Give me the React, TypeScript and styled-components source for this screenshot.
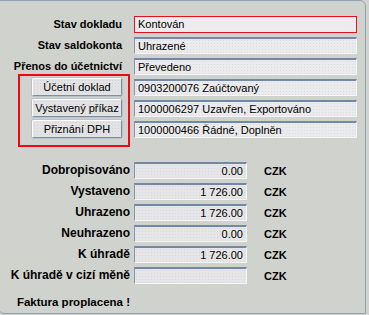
import React from "react";
import styled, { createGlobalStyle } from "styled-components";

const GlobalStyle = createGlobalStyle`
  html, body {
    margin: 0;
    padding: 0;
    background: #d0d2ce;
    overflow: hidden;
  }
  body {
    font-family: "Liberation Sans", Arial, sans-serif;
    color: #000;
  }
`;

interface StatusRow {
  label: string;
  value: string;
  focused?: boolean;
}

interface DocRow {
  button: string;
  value: string;
}

interface AmountRow {
  label: string;
  value: string;
}

const statusRows: StatusRow[] = [
  { label: "Stav dokladu", value: "Kontován", focused: true },
  { label: "Stav saldokonta", value: "Uhrazené" },
  { label: "Přenos do účetnictví", value: "Převedeno" },
];

const docRows: DocRow[] = [
  { button: "Účetní doklad", value: "0903200076 Zaúčtovaný" },
  { button: "Vystavený příkaz", value: "1000006297 Uzavřen, Exportováno" },
  { button: "Přiznání DPH", value: "1000000466 Řádné, Doplněn" },
];

const amountRows: AmountRow[] = [
  { label: "Dobropisováno", value: "0.00" },
  { label: "Vystaveno", value: "1 726.00" },
  { label: "Uhrazeno", value: "1 726.00" },
  { label: "Neuhrazeno", value: "0.00" },
  { label: "K úhradě", value: "1 726.00" },
  { label: "K úhradě v cizí měně", value: "" },
];

const App: React.FC = () => {
  return (
    <>
      <GlobalStyle />
      <Panel>
        <TopGrid>
          {statusRows.map((row) => (
            <React.Fragment key={row.label}>
              <Label>{row.label}</Label>
              <Field $focused={row.focused}>{row.value}</Field>
            </React.Fragment>
          ))}
          <ButtonGroup>
            {docRows.map((row) => (
              <Button key={row.button}>{row.button}</Button>
            ))}
          </ButtonGroup>
          {docRows.map((row) => (
            <Field key={row.value}>{row.value}</Field>
          ))}
        </TopGrid>

        <AmountGrid>
          {amountRows.map((row) => (
            <React.Fragment key={row.label}>
              <AmountLabel>{row.label}</AmountLabel>
              <AmountField>{row.value}</AmountField>
              <Currency>CZK</Currency>
            </React.Fragment>
          ))}
          <Note>Faktura proplacena !</Note>
        </AmountGrid>
      </Panel>
    </>
  );
};

const fieldBorders = `
  border-top: 2px solid #7188a6;
  border-left: 1px solid #8a96a6;
  border-right: 1px solid #f6f6f6;
  border-bottom: 1px solid #f6f6f6;
`;

const Panel = styled.div`
  box-sizing: border-box;
  width: 368px;
  height: 314px;
  margin-left: -2px;
  border: 1px solid #8fa1b3;
  border-top-right-radius: 6px;
  border-bottom-left-radius: 6px;
  background: #d0d2ce;
  padding-top: 15px;
`;

const TopGrid = styled.div`
  display: grid;
  grid-template-columns: 123px 223px;
  grid-template-rows: repeat(6, 17px);
  column-gap: 12px;
  row-gap: 4px;
`;

const Label = styled.div`
  font-size: 11px;
  font-weight: bold;
  line-height: 17px;
  text-align: right;
  white-space: nowrap;
`;

const Field = styled.div<{ $focused?: boolean }>`
  grid-column: 2;
  box-sizing: border-box;
  height: 17px;
  padding-left: 3px;
  font-size: 11px;
  line-height: 14px;
  white-space: nowrap;
  overflow: hidden;
  background-color: #ebeaec;
  background-image: radial-gradient(#dcdbe0 0.6px, transparent 0.8px);
  background-size: 3px 3px;
  ${fieldBorders}
  ${(p) =>
    p.$focused &&
    `
    border: 1px solid #e4101c;
    background: #ecebee;
    line-height: 15px;
  `}
`;

const ButtonGroup = styled.div`
  grid-column: 1;
  grid-row: 4 / span 3;
  margin: -5px -8px -9px 19px;
  padding: 2px 6px 0 0;
  border: 2px solid #ea0a14;
  display: flex;
  flex-direction: column;
  align-items: flex-end;
  gap: 3px;
`;

const Button = styled.div`
  box-sizing: border-box;
  width: 90px;
  height: 18px;
  font-size: 11px;
  line-height: 16px;
  text-align: center;
  white-space: nowrap;
  border-radius: 2px;
  background-color: #e3e3e5;
  background-image: radial-gradient(#d4d4d8 0.6px, transparent 0.8px);
  background-size: 3px 3px;
  border-top: 1px solid #ffffff;
  border-left: 1px solid #ffffff;
  border-right: 1px solid #7d8ea4;
  border-bottom: 1px solid #7d8ea4;
  box-shadow: 0 0 0 1px #b8c0ca;
`;

const AmountGrid = styled.div`
  display: grid;
  grid-template-columns: 131px 113px auto;
  grid-auto-rows: 17px;
  column-gap: 4px;
  row-gap: 4px;
  margin-top: 24px;
`;

const AmountLabel = styled.div`
  font-size: 12px;
  font-weight: bold;
  line-height: 17px;
  text-align: right;
  white-space: nowrap;
`;

const AmountField = styled.div`
  box-sizing: border-box;
  height: 17px;
  padding-right: 3px;
  font-size: 11px;
  line-height: 14px;
  text-align: right;
  white-space: nowrap;
  background-color: #e6e5e7;
  background-image: radial-gradient(#d8d7dc 0.6px, transparent 0.8px);
  background-size: 3px 3px;
  ${fieldBorders}
`;

const Currency = styled.div`
  padding-left: 13px;
  font-size: 11px;
  font-weight: bold;
  line-height: 19px;
`;

const Note = styled(AmountLabel)`
  grid-column: 1;
  margin-top: 6px;
  font-size: 11.5px;
`;

export default App;
